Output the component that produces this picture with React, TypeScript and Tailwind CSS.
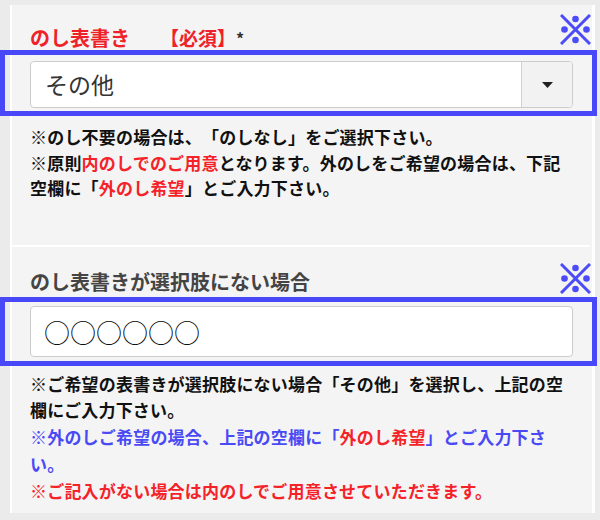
import React from 'react';

const FONT = '"Noto Sans CJK JP", "Noto Sans", sans-serif';

// 青い「※」マーク（注釈）
function Kome() {
    return (
        <svg width="31" height="31" viewBox="0 0 31 31" className="shrink-0 -mr-[18px]">
            <path d="M1 1 L30 30 M30 1 L1 30" stroke="#4b4bf7" strokeWidth="3" />
            <circle cx="15.5" cy="5" r="3.3" fill="#4b4bf7" />
            <circle cx="15.5" cy="26" r="3.3" fill="#4b4bf7" />
            <circle cx="4.5" cy="15.5" r="3.3" fill="#4b4bf7" />
            <circle cx="26.5" cy="15.5" r="3.3" fill="#4b4bf7" />
        </svg>
    );
}

export default function App() {
    return (
        <div
            className="w-[600px] h-[520px] bg-[#ebebeb] pt-[5px] pl-[10px] pr-[5px] overflow-hidden [text-spacing-trim:space-all]"
            style={{ fontFamily: FONT }}
        >
            <div className="bg-[#f4f4f4] border-l-2 border-r-[3px] border-white h-[508px] pl-[18px] pr-[19px] pt-[9px]">
                {/* のし表書き */}
                <div className="flex justify-between h-[36px]">
                    <div className="self-end leading-[24px] text-[20px] font-bold text-[#ee2228] whitespace-nowrap">
                        のし表書き<span className="ml-[30px] text-[19px]">【必須】</span>
                        <span className="text-[#333] text-[16px] align-top">*</span>
                    </div>
                    <Kome />
                </div>

                <div className="-ml-[30px] -mr-[24px] border-[5px] border-[#4848f8] pl-[25px] pr-[19px] pt-[6px] pb-[3px]">
                    <div className="flex h-[47px] bg-white border border-[#cccccc] rounded-[4px] overflow-hidden">
                        <div className="flex-1 flex items-center pl-[14px] text-[23px] text-[#333]">その他</div>
                        <div className="w-[51px] flex items-center justify-center bg-[#f2f2f2] border-l border-[#d0d0d0]">
                            <svg width="11" height="6" viewBox="0 0 11 6">
                                <path d="M0 0 H11 L5.5 6 Z" fill="#222" />
                            </svg>
                        </div>
                    </div>
                </div>

                <p className="mt-[8px] text-[17px] leading-[25.5px] font-bold text-[#111] tracking-[0.2px] whitespace-nowrap">
                    ※のし不要の場合は、「のしなし」をご選択下さい。<br />
                    ※原則<span className="text-[#f52229]">内のしでのご用意</span>となります。外のしをご希望の場合は、下記<br />
                    空欄に「<span className="text-[#f52229]">外のし希望</span>」とご入力下さい。
                </p>

                <div className="-ml-[18px] -mr-[17px] mt-[44px] h-[2px] bg-white" />

                {/* のし表書きが選択肢にない場合 */}
                <div className="flex justify-between mt-[16px] h-[34px]">
                    <div className="self-end mb-[3px] leading-[24px] text-[20px] font-bold text-[#444] whitespace-nowrap">
                        のし表書きが選択肢にない場合
                    </div>
                    <Kome />
                </div>

                <div className="-ml-[30px] -mr-[24px] border-[5px] border-[#4848f8] pl-[25px] pr-[19px] pt-[4px] pb-[4px]">
                    <div className="flex items-center h-[51px] bg-white border border-[#cccccc] rounded-[4px] pl-[13px] text-[26px] text-black font-light">
                        ○○○○○○
                    </div>
                </div>

                <p className="mt-[5px] text-[17px] leading-[26.75px] font-bold text-[#111] tracking-[0.2px] whitespace-nowrap">
                    ※ご希望の表書きが選択肢にない場合「その他」を選択し、上記の空<br />
                    欄にご入力下さい。<br />
                    <span className="text-[#4a4af5]">
                        ※外のしご希望の場合、上記の空欄に「<span className="text-[#f52229]">外のし希望</span>」とご入力下さ<br />
                        い。
                    </span>
                    <br />
                    <span className="text-[#f52229]">※ご記入がない場合は内のしでご用意させていただきます。</span>
                </p>
            </div>
        </div>
    );
}
